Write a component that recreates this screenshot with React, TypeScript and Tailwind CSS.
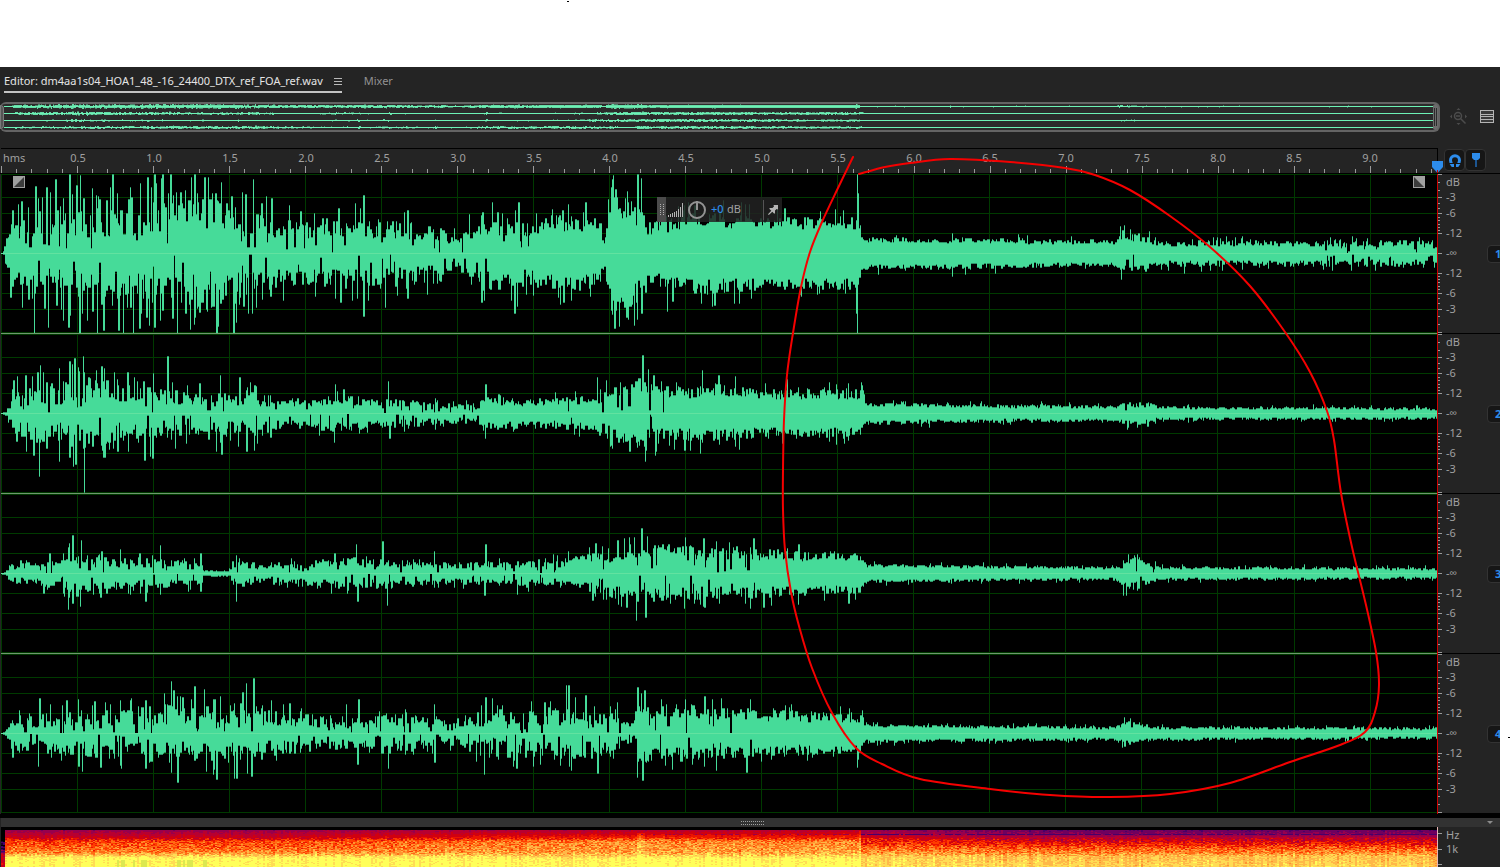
import { ReactNode } from "react";

type EnvPoint = [number, number, number];
type Peak = [number, number];

interface Channel {
  id: number;
  // [x, usual minimum, usual maximum] of half the amplitude
  env: EnvPoint[];
  up: Peak[];
  down: Peak[];
}

const WIDTH = 1437;

const CHANNELS: Channel[] = [
  {
    id: 1,
    env: [
      [1, 0, 0], [3, 1, 2], [6, 10, 20], [12, 12, 34], [30, 14, 40], [60, 15, 46], [100, 16, 52], [150, 18, 58],
      [200, 17, 58], [230, 16, 54], [260, 17, 42], [290, 14, 34], [330, 15, 36], [380, 15, 34], [440, 11, 29],
      [455, 7, 18], [475, 13, 28], [490, 18, 38], [530, 16, 32], [565, 21, 40], [598, 18, 36], [604, 8, 14],
      [610, 32, 62], [618, 34, 58], [640, 26, 52], [648, 18, 32], [700, 23, 41], [760, 24, 37], [857, 24, 36],
      [862, 11, 16], [960, 10, 16], [1060, 9, 14], [1115, 9, 14], [1122, 12, 25], [1150, 9, 17], [1154, 7, 13],
      [1437, 6, 13],
    ],
    up: [
      [12, 43], [18, 49], [21, 52], [28, 46], [35, 67], [42, 56], [46, 66], [50, 61], [55, 74], [63, 55], [69, 79],
      [72, 59], [76, 68], [80, 78], [83, 55], [96, 58], [99, 54], [110, 66], [112, 79], [117, 60], [131, 56],
      [140, 70], [147, 76], [151, 66], [154, 79], [156, 70], [162, 79], [168, 60], [170, 79], [176, 61], [180, 61],
      [185, 63], [194, 79], [197, 60], [204, 76], [212, 60], [215, 60], [217, 53], [231, 57], [242, 61], [245, 59],
      [253, 74], [261, 50], [266, 57], [271, 55], [289, 48], [300, 42], [314, 40], [338, 45], [355, 50], [363, 58],
      [404, 41], [407, 43], [469, 39], [482, 41], [492, 51], [497, 41], [515, 43], [518, 51], [536, 40], [562, 43],
      [568, 49], [585, 51], [611, 66], [612, 74], [613, 78], [615, 64], [631, 52], [637, 79], [641, 75], [694, 48],
      [745, 49], [784, 45], [820, 42], [857, 79], [858, 60], [952, 20], [1120, 27], [1124, 28], [1130, 24],
    ],
    down: [
      [10, 44], [22, 54], [28, 46], [34, 80], [44, 55], [48, 74], [56, 52], [63, 67], [68, 74], [70, 62],
      [79, 80], [82, 60], [92, 58], [97, 80], [103, 77], [112, 52], [118, 77], [123, 80],
      [130, 54], [133, 80], [139, 75], [141, 60], [146, 64], [149, 72], [154, 74], [160, 67], [172, 65], [177, 80],
      [185, 60], [195, 64], [199, 59], [207, 58], [216, 80], [218, 73], [233, 80], [236, 69],
      [243, 53], [252, 60], [270, 43], [315, 43], [340, 49], [357, 45], [363, 63], [385, 54], [407, 45], [427, 41],
      [481, 49], [484, 47], [514, 60], [517, 53], [563, 49], [571, 47], [614, 75], [619, 73], [626, 64], [637, 66],
      [641, 60], [667, 58], [672, 48], [701, 50], [714, 52], [817, 41], [856, 60], [857, 80], [952, 23],
      [1121, 26], [1184, 20],
    ],
  },
  {
    id: 2,
    env: [
      [1, 0, 0], [5, 1, 3], [12, 6, 20], [30, 8, 30], [80, 9, 36], [150, 9, 26], [200, 7, 21], [260, 7, 24],
      [285, 6, 14], [330, 8, 19], [380, 7, 15], [440, 5, 12], [472, 3, 9], [480, 9, 18], [530, 7, 14],
      [590, 8, 18], [600, 10, 26], [640, 16, 36], [670, 14, 27], [710, 16, 30], [760, 14, 25], [862, 13, 24],
      [865, 7, 11], [1000, 5, 9], [1115, 5, 8], [1122, 6, 13], [1152, 6, 11], [1156, 4, 7], [1437, 3, 6],
    ],
    up: [
      [13, 33], [17, 37], [25, 38], [32, 37], [37, 41], [40, 48], [51, 30], [59, 45], [69, 52], [72, 49], [74, 55],
      [83, 57], [88, 36], [96, 43], [101, 47], [104, 45], [107, 33], [117, 34], [127, 41], [137, 32], [143, 32],
      [153, 40], [167, 57], [172, 31], [199, 30], [220, 38], [239, 36], [250, 31], [254, 28], [335, 29], [343, 24],
      [388, 32], [485, 29], [597, 36], [642, 58], [648, 44], [653, 38], [702, 43], [718, 38], [787, 34], [862, 28],
    ],
    down: [
      [16, 28], [26, 38], [33, 42], [39, 63], [46, 35], [59, 48], [69, 44], [73, 53], [75, 51], [84, 79],
      [103, 44], [109, 36], [117, 38], [128, 38], [144, 47], [150, 43], [152, 45], [175, 35], [208, 26], [216, 38],
      [221, 41], [238, 33], [246, 38], [254, 37], [270, 24], [334, 29], [389, 25], [485, 25], [629, 38], [645, 48],
      [684, 37], [700, 40], [782, 30], [843, 25],
    ],
  },
  {
    id: 3,
    env: [
      [1, 0, 0], [5, 1, 3], [10, 4, 10], [60, 6, 15], [75, 9, 24], [90, 6, 17], [130, 6, 15], [170, 5, 16],
      [200, 5, 12], [203, 2, 3], [228, 2, 3], [232, 5, 13], [290, 4, 11], [340, 6, 16], [400, 6, 15], [440, 5, 11],
      [500, 5, 12], [565, 6, 15], [610, 10, 24], [640, 15, 31], [700, 13, 27], [750, 13, 27], [800, 12, 22],
      [862, 12, 20], [865, 6, 9], [1115, 4, 7], [1122, 8, 17], [1152, 6, 15], [1156, 4, 7], [1437, 3, 6],
    ],
    up: [
      [49, 20], [69, 30], [72, 38], [81, 33], [101, 22], [120, 24], [139, 20], [160, 28], [200, 20], [236, 18],
      [334, 20], [356, 29], [382, 32], [434, 22], [485, 29], [568, 22], [595, 30], [602, 27], [617, 33], [634, 36],
      [641, 45], [647, 37], [668, 29], [685, 36], [703, 35], [716, 32], [753, 35], [787, 25], [798, 29], [1128, 19],
    ],
    down: [
      [43, 20], [68, 36], [72, 30], [80, 33], [100, 24], [130, 21], [145, 28], [160, 21], [200, 18], [236, 28],
      [357, 28], [387, 32], [484, 22], [517, 21], [592, 27], [621, 33], [626, 34], [636, 47], [645, 44], [684, 35],
      [704, 34], [750, 35], [763, 34], [798, 31], [848, 30],
    ],
  },
  {
    id: 4,
    env: [
      [1, 0, 0], [5, 1, 3], [12, 5, 16], [50, 6, 22], [100, 7, 25], [170, 8, 31], [240, 8, 30], [280, 7, 22],
      [340, 5, 16], [390, 6, 21], [450, 5, 13], [480, 6, 23], [550, 8, 27], [615, 8, 24], [622, 6, 11],
      [632, 6, 13], [638, 17, 38], [650, 13, 27], [700, 14, 29], [760, 12, 24], [862, 10, 20], [865, 6, 9],
      [1115, 4, 7], [1122, 6, 15], [1138, 6, 11], [1156, 4, 7], [1437, 3, 6],
    ],
    up: [
      [39, 35], [50, 29], [66, 33], [78, 34], [94, 32], [120, 33], [145, 33], [171, 52], [173, 43], [180, 37],
      [194, 47], [204, 44], [213, 34], [215, 34], [242, 41], [246, 50], [253, 55], [271, 33], [289, 30], [346, 29],
      [358, 34], [434, 29], [485, 36], [492, 35], [544, 31], [566, 48], [568, 48], [575, 36], [585, 38], [617, 31],
      [637, 46], [641, 40], [644, 43], [685, 34], [704, 37], [750, 34], [862, 23], [1124, 16], [1130, 15],
    ],
    down: [
      [12, 24], [38, 33], [78, 33], [82, 38], [100, 34], [120, 32], [145, 35], [171, 39], [177, 49], [206, 38],
      [216, 46], [234, 45], [236, 45], [247, 40], [251, 43], [276, 27], [357, 31], [388, 35], [434, 29], [484, 41],
      [516, 35], [571, 37], [597, 40], [637, 44], [642, 47], [704, 33], [746, 39], [857, 34],
    ],
  },
];

const GRID_X = [
  1, 77, 153, 229, 305, 381, 457, 533, 609, 685, 761, 837, 913, 989, 1065, 1141, 1217, 1294, 1370,
];
const GRID_Y = [0, 23, 39, 59, 99, 119, 135, 158];

const createRandom = (seed: number) => {
  let state = seed;
  return () => {
    state = (state * 1664525 + 1013904223) >>> 0;
    return state / 4294967296;
  };
};

const envelopeAt = (env: EnvPoint[], x: number) => {
  for (let i = 1; i < env.length; i++) {
    const [x1, lo1, hi1] = env[i];
    if (x <= x1) {
      const [x0, lo0, hi0] = env[i - 1];
      const t = (x - x0) / (x1 - x0);
      return [lo0 + (lo1 - lo0) * t, hi0 + (hi1 - hi0) * t];
    }
  }
  return [4, 7];
};

const buildSide = (env: EnvPoint[], peaks: Peak[], seed: number) => {
  const random = createRandom(seed);
  const values: number[] = new Array(WIDTH).fill(0);
  let x = 1;
  while (x < WIDTH) {
    const [lo, hi] = envelopeAt(env, x);
    let value = lo + (hi - lo) * random();
    let hold = 1 + Math.floor(random() * 2.2);
    const chance = random();
    if (hi > 5 && chance > 0.92) {
      // a short spike over the usual maximum
      value = hi * (1 + random() * 0.35);
      hold = 1;
    } else if (x > 20 && hi > lo * 2 && chance < 0.1) {
      value = random() * lo * 0.8;
    }
    for (let i = 0; i < hold && x < WIDTH; i++) {
      values[x] = Math.round(value);
      x++;
    }
  }
  peaks.forEach(([px, amp], i) => {
    values[px] = amp;
    if (i % 2 === 0 && px < 856) values[px + 1] = amp;
  });
  return values;
};

const WAVES = CHANNELS.map(({ id, env, up, down }) => ({
  up: buildSide(env, up, id * 7919),
  down: buildSide(env, down, id * 104729),
}));

const wavePath = (index: number, trim: number) => {
  const { up, down } = WAVES[index];
  let d = "";
  for (let x = 1; x < WIDTH; x++) {
    const top = Math.max(0, 79 - Math.max(0, up[x] - trim));
    const bottom = Math.min(159, 80 + Math.max(0, down[x] - trim));
    d += `M${x} ${top}h1V${bottom}h-1z`;
  }
  return d;
};

const overviewPath = (index: number, unit: number) => {
  const { up, down } = WAVES[index];
  const y = 2 + index * 7;
  let d = "";
  for (let x = 1; x < WIDTH; x++) {
    const a = Math.min(2, Math.round(up[x] / unit));
    const b = Math.min(2, Math.round(down[x] / unit));
    if (a + b > 0) d += `M${x} ${y - a}h1V${y + 1 + b}h-1z`;
  }
  return d;
};

const HEAT = [
  "#000000", "#1c0030", "#48006a", "#70005e", "#98004c", "#b80030", "#d00010", "#ec1400",
  "#ff3c00", "#ff6c14", "#ff9430", "#ffb848", "#ffdc54", "#ffff5a", "#dce850",
];

const LEFT_LEVELS: Peak[] = [[0, 0], [2, 0], [3, 4], [7, 5], [11, 6], [14, 8], [20, 8.7], [25, 9.6], [28, 11.5], [31, 12.8], [40, 13]];
const MID_LEVELS: Peak[] = [[0, 0], [2, 0], [3, 5], [7, 6.2], [11, 7.6], [14, 9.6], [20, 10], [25, 10.4], [28, 11.5], [31, 12.6], [40, 13]];
const RIGHT_LEVELS: Peak[] = [[0, 0], [2, 0], [3, 2.8], [7, 3.7], [11, 5.3], [16, 6.8], [20, 8.4], [25, 9.6], [29, 11.2], [40, 11.8]];

const levelAt = (levels: Peak[], y: number) => {
  for (let i = 1; i < levels.length; i++) {
    if (y <= levels[i][0]) {
      const t = (y - levels[i - 1][0]) / (levels[i][0] - levels[i - 1][0]);
      return levels[i - 1][1] + (levels[i][1] - levels[i - 1][1]) * t;
    }
  }
  return 12;
};

const spectrogram = () => {
  const random = createRandom(4242);
  const paths = HEAT.map(() => "");
  const columns = Array.from({ length: 720 }, () => random() - 0.5);
  for (let y = 3; y < 40; y++) {
    for (let i = 0; i < 718; i++) {
      const x = 1 + i * 2;
      const mix = Math.min(1, Math.max(0, (x - 250) / 350));
      let level =
        x < 860
          ? levelAt(LEFT_LEVELS, y) * (1 - mix) + levelAt(MID_LEVELS, y) * mix
          : levelAt(RIGHT_LEVELS, y) + Math.max(0, (1040 - x) / 180) * 1.2 * (y < 16 ? 1 : 0.4);
      const spread = y < 11 ? 0.8 : y < 29 ? 3.2 : 1.4;
      level += (random() - 0.5) * spread + columns[i] * (y > 28 ? 1.4 : 0.7);
      if (x > 857 && x < 860) level += 1.2;
      if (x > 636 && x < 644 && y > 5) level += 1.2;
      if (y === 7 && x > 640 && random() < (x > 860 ? 0.8 : 0.4)) level = x > 860 ? 2.4 : 4.4;
      if (x < 4) level -= 7;
      if (x > 110 && x < 220 && y > 32 && columns[i] > 0.2) level = 14;
      else level = Math.min(13, level);
      paths[Math.max(0, Math.round(level))] += `M${x} ${y}h2v1h-2z`;
    }
  }
  return paths;
};

const HEAT_PATHS = spectrogram();

const Spectrogram = () => (
  <svg className="block h-10 w-full" viewBox="1 0 1436 40" preserveAspectRatio="none" shapeRendering="crispEdges">
    <rect x="1" width="1436" height="40" fill="#000" />
    {HEAT_PATHS.map((d, i) => (
      <path key={HEAT[i]} d={d} fill={HEAT[i]} />
    ))}
  </svg>
);

const TrackWave = ({ index }: { index: number }) => (
  <svg className="block h-40 w-full" viewBox="1 0 1436 160" preserveAspectRatio="none" shapeRendering="crispEdges">
    <rect x="1" width="1436" height="160" fill="#000" />
    {GRID_X.map((x) => (
      <rect key={x} x={x} width="1" height="159" fill="#003a00" />
    ))}
    {GRID_Y.map((y) => (
      <rect key={y} x="1" y={y} width="1436" height="1" fill="#003a00" />
    ))}
    <path d={wavePath(index, 0)} fill="#2f9468" />
    <path d={wavePath(index, 1)} fill="#46db99" />
    <rect x="1" y="79" width="1436" height="1" fill="#62e2a0" />
    {index < 3 && <rect x="1" y="159" width="1436" height="1" fill="#6f966f" />}
  </svg>
);

const MAJOR = [0, 23, 39, 59, 79, 99, 119, 135, 158];
const MINOR = [8, 16, 29, 34, 43, 46, 50, 53, 56, 102, 105, 108, 112, 115, 124, 129, 142, 150];

const LEVEL_LABELS = [
  { text: "dB", size: "h-[15px]" },
  { text: "-3", size: "h-4" },
  { text: "-6", size: "h-4" },
  { text: "-12", size: "h-6" },
  { text: "-∞", size: "h-4" },
  { text: "-12", size: "h-6" },
  { text: "-6", size: "h-4" },
  { text: "-3", size: "h-4" },
];

const LevelScale = ({ id }: { id: number }) => (
  <div className="flex h-40 w-[62px] shrink-0 overflow-hidden border-b border-black text-[#a0a0a0]">
    <svg className="block h-40 w-2 shrink-0" viewBox="0 0 8 160" shapeRendering="crispEdges" fill="#9a9a9a">
      {MAJOR.map((y) => (
        <rect key={y} y={y} width="4" height="1" />
      ))}
      {MINOR.map((y) => (
        <rect key={y} y={y} width="2" height="1" />
      ))}
    </svg>
    <div className="w-[41px] shrink-0">
      {LEVEL_LABELS.map(({ text, size }, i) => (
        <div key={i} className={`${size} flex items-center`}>
          {text}
        </div>
      ))}
    </div>
    <button className="mt-[71px] flex h-[18px] w-6 shrink-0 items-center rounded-sm border border-[#333] bg-[#161616] pl-[7px] font-bold text-[#2d8ceb]">
      {id}
    </button>
  </div>
);

const Overview = () => (
  <div className="flex h-[30px] min-w-0 flex-1 rounded-md border-2 border-l-0 border-[#646464] bg-[#2b2b2b]">
    <div className="my-px w-1 rounded-r-sm border border-[#7a7a7a] bg-[#555]" />
    <svg className="block h-[26px] min-w-0 flex-1" viewBox="1 0 1436 26" preserveAspectRatio="none" shapeRendering="crispEdges">
      {CHANNELS.map(({ id }, i) => (
        <g key={id} fill="#6df2b6">
          <path d={overviewPath(i, 34)} opacity="0.45" />
          <path d={overviewPath(i, 46)} opacity="0.8" />
          <rect x="1" y={2 + i * 7} width="1436" height="1" />
        </g>
      ))}
    </svg>
    <div className="flex w-[5px] justify-center gap-px rounded-sm bg-[#6c6c6c] py-1">
      <div className="w-px bg-[#2b2b2b]" />
      <div className="w-px bg-[#2b2b2b]" />
    </div>
  </div>
);

const RULER_LABELS = Array.from({ length: 18 }, (_, i) => ((i + 1) / 2).toFixed(1));

const Ruler = () => (
  <div className="min-w-0 flex-1 border-t border-r border-black">
    <div className="grid h-[17px] grid-cols-[39fr_repeat(18,76fr)_29fr] items-center text-[#a0a0a0]">
      <span className="pl-[2px]">hms</span>
      {RULER_LABELS.map((label) => (
        <span key={label} className="text-center">
          {label}
        </span>
      ))}
    </div>
    <svg className="block h-[7px] w-full" viewBox="1 0 1436 7" preserveAspectRatio="none" shapeRendering="crispEdges" fill="#9a9a9a">
      {Array.from({ length: 95 }, (_, i) => (
        <rect key={i} x={Math.round(1 + i * 15.21)} y={i % 5 ? 3 : 0} width="1" height={i % 5 ? 4 : 7} />
      ))}
    </svg>
  </div>
);

const ToolButton = ({ label, children }: { label: string; children: ReactNode }) => (
  <button
    aria-label={label}
    className="flex h-[22px] w-[21px] items-center justify-center rounded-sm border border-[#333] bg-[#161616]"
  >
    {children}
  </button>
);

const GainPanel = () => (
  <div className="absolute top-[23px] left-[657px] flex h-[25px] w-[125px] items-center bg-[#222222]/85">
    <div className="flex h-full w-[9px] items-center justify-center bg-[#4b4b4b]">
      <svg width="4" height="11" shapeRendering="crispEdges" fill="#b0b0b0">
        {[0, 2, 4, 6, 8, 10].map((y) => (
          <path key={y} d={`M0 ${y}h1v1h-1zM3 ${y}h1v1h-1z`} />
        ))}
      </svg>
    </div>
    <svg className="ml-[2px]" width="16" height="15" shapeRendering="crispEdges" fill="#b4b4b4">
      {[2, 3, 4, 5, 6, 8, 10, 14].map((h, i) => (
        <rect key={h} x={i * 2} y={15 - h} width="1" height={h} />
      ))}
    </svg>
    <svg className="ml-[3px]" width="20" height="20" viewBox="0 0 20 20" fill="none" stroke="#939393" strokeWidth="2">
      <circle cx="10" cy="10" r="8" />
      <path d="M10 1v9" />
    </svg>
    <label className="ml-1 flex items-center pb-px text-[#a0a0a0]">
      <input
        aria-label="Gain"
        defaultValue="+0"
        className="w-4 bg-transparent font-medium text-[#2d8ceb] outline-none"
      />
      dB
    </label>
    <div className="ml-auto h-5 w-px bg-[#555]" />
    <button aria-label="Pin" className="mr-1 ml-1">
      <svg className="block" width="10" height="10" viewBox="0 0 10 10" fill="#b4b4b4">
        <path d="M5.5 0H10v4.500L8.600 4 7 5.600V8.500H6L4.300 6.700.8 10 0 9.200 3.300 5.700 1.500 4V3h2.900L6 1.400z" />
      </svg>
    </button>
  </div>
);

const FadeHandle = ({ flip }: { flip?: boolean }) => (
  <svg className="block" width="12" height="12" viewBox="0 0 12 12">
    <rect width="12" height="12" fill="#a0a0a0" />
    <path d={flip ? "M1 1V11H11z" : "M11 1V11H1z"} fill="#3c3c3c" />
  </svg>
);

const OUTLINE: Peak[] = [
  [853, 157], [838, 188], [822, 222], [810, 252], [801, 287], [793, 333], [787, 375], [784, 420], [783, 470],
  [783, 510], [785, 550], [791, 592], [799, 626], [812, 668], [832, 713], [856, 748], [882, 764], [920, 779],
  [990, 789], [1050, 795], [1110, 797], [1170, 794], [1230, 783], [1290, 762], [1340, 745], [1365, 732],
  [1375, 712], [1379, 685], [1376, 652], [1366, 605], [1352, 547], [1341, 493], [1334, 440], [1327, 411],
  [1310, 372], [1285, 332], [1250, 286], [1210, 247], [1170, 216], [1130, 190], [1095, 175], [1065, 168],
  [1010, 162], [950, 159], [910, 163], [885, 167], [859, 174],
];

const smoothPath = (points: Peak[]) => {
  let d = `M${points[0].join(" ")}`;
  for (let i = 0; i < points.length - 1; i++) {
    const p0 = points[Math.max(0, i - 1)];
    const p1 = points[i];
    const p2 = points[i + 1];
    const p3 = points[Math.min(points.length - 1, i + 2)];
    d += `C${p1[0] + (p2[0] - p0[0]) / 6} ${p1[1] + (p2[1] - p0[1]) / 6} ${p2[0] - (p3[0] - p1[0]) / 6} ${p2[1] - (p3[1] - p1[1]) / 6} ${p2[0]} ${p2[1]}`;
  }
  return d;
};

const App = () => {
  return (
    <main className="relative overflow-hidden bg-white pt-[67px] font-['Noto_Sans','Open_Sans',sans-serif] text-[11px] leading-4">
      <div className="mr-[10px] bg-[#242424]">
        <header className="flex h-[35px] items-start gap-[22px] pt-[6px] pl-1">
          <button className="flex h-5 items-start gap-[11px] border-b-2 border-[#c4c4c4] text-[#e4e4e4]">
            Editor: dm4aa1s04_HOA1_48_-16_24400_DTX_ref_FOA_ref.wav
            <svg className="mt-[5px]" width="8" height="7" shapeRendering="crispEdges" fill="#b8b8b8">
              <path d="M0 0h8v1H0zM0 3h8v1H0zM0 6h8v1H0z" />
            </svg>
          </button>
          <button className="text-[#929292]">Mixer</button>
        </header>

        <div className="flex h-[46px] items-start">
          <Overview />
          <div className="flex h-7 w-[60px] items-center justify-between pr-[6px] pl-[10px]">
            <button aria-label="Zoom out full">
              <svg className="block" width="17" height="17" viewBox="0 0 17 17" fill="none" stroke="#4c4c4c">
                <circle cx="8" cy="8" r="3.500" strokeWidth="1.500" />
                <path d="M6 8h4M10.500 10.500l5 5" strokeWidth="1.500" />
                <path d="M6.500 2l2-2 2 2zM6.500 15l2 2 2-2zM2 6.500l-2 2 2 2zM15 6.500l2 2-2 2z" fill="#4c4c4c" stroke="none" />
              </svg>
            </button>
            <button aria-label="Track list">
              <svg className="block" width="14" height="13" shapeRendering="crispEdges">
                <path d="M0 0h14v13H0z" fill="#b4b4b4" />
                <path d="M1 1h12v3H1zM1 5h12v1H1zM1 7h12v2H1zM1 10h12v2H1z" fill="#3a3a3a" />
              </svg>
            </button>
          </div>
        </div>

        <div className="flex h-[26px] border-b border-black pl-px">
          <Ruler />
          <div className="flex w-[62px] items-start pt-px pl-[6px]">
            <ToolButton label="Snap">
              <svg width="12" height="13" viewBox="0 0 12 13" fill="none" stroke="#2d8ceb" strokeWidth="3">
                <path d="M5 11.500H3.500C2.200 10 1.500 8.500 1.500 6.300a4.500 4.500 0 0 1 9 0C10.500 8.500 9.800 10 8.500 11.500H7" />
                <path d="M0 9.500h5M7 9.500h5" stroke="#161616" strokeWidth="1" />
              </svg>
            </ToolButton>
            <ToolButton label="Marker">
              <svg width="8" height="14" viewBox="0 0 8 14">
                <path d="M3 5h2v9H3z" fill="#1d5590" />
                <path d="M0 0h8v5L6 7H2L0 5z" fill="#2d8ceb" />
              </svg>
            </ToolButton>
          </div>
        </div>

        <section className="relative bg-black pb-[4px]">
          {CHANNELS.map(({ id }, i) => (
            <div key={id} className="flex bg-[#242424] pl-px">
              <div className="min-w-0 flex-1 border-r border-[#d00000]">
                <TrackWave index={i} />
              </div>
              <LevelScale id={id} />
            </div>
          ))}
          <div className="absolute top-[2px] right-[75px] left-[13px] flex justify-between">
            <FadeHandle />
            <FadeHandle flip />
          </div>
          <svg className="absolute -top-[13px] right-[57px]" width="11" height="12" viewBox="0 0 11 12">
            <path d="M0 0h11v6L5.500 12 0 6z" fill="#2d8ceb" />
            <path d="M5 9h1v3H5z" fill="#d00000" />
          </svg>
          <GainPanel />
        </section>

        <div className="grid h-[9px] grid-cols-[1fr_auto_1fr] items-center border-l border-[#242424] bg-[#323232] pr-[7px] pl-3">
          <span />
          <svg width="24" height="4" shapeRendering="crispEdges" fill="#a0a0a0">
            {Array.from({ length: 12 }, (_, i) => (
              <path key={i} d={`M${i * 2} 0h1v1h-1zM${i * 2} 3h1v1h-1z`} />
            ))}
          </svg>
          <svg className="justify-self-end" width="6" height="3" viewBox="0 0 6 3">
            <path d="M0 0h6L3 3z" fill="#8c8c8c" />
          </svg>
        </div>

        <div className="flex pl-px">
          <div className="min-w-0 flex-1 border-r border-[#e8b4b4]">
            <Spectrogram />
          </div>
          <div className="flex w-[62px] text-[#a0a0a0]">
            <svg className="block w-2" height="40" shapeRendering="crispEdges" fill="#9a9a9a">
              <path d="M0 6h4v1H0zM0 22h4v1H0zM0 37h4v1H0z" />
            </svg>
            <div>
              <div className="h-[14px]">Hz</div>
              <div className="h-4">1k</div>
            </div>
          </div>
        </div>
      </div>

      <svg className="pointer-events-none absolute top-0 left-0" width="1510" height="867" viewBox="0 0 1510 867">
        <path d={smoothPath(OUTLINE)} fill="none" stroke="#f50000" strokeWidth="2" strokeLinecap="round" />
        <path d="M567 1h2v1h-2zM1508 737h2v1h-2z" />
      </svg>
    </main>
  );
};

export default App;
